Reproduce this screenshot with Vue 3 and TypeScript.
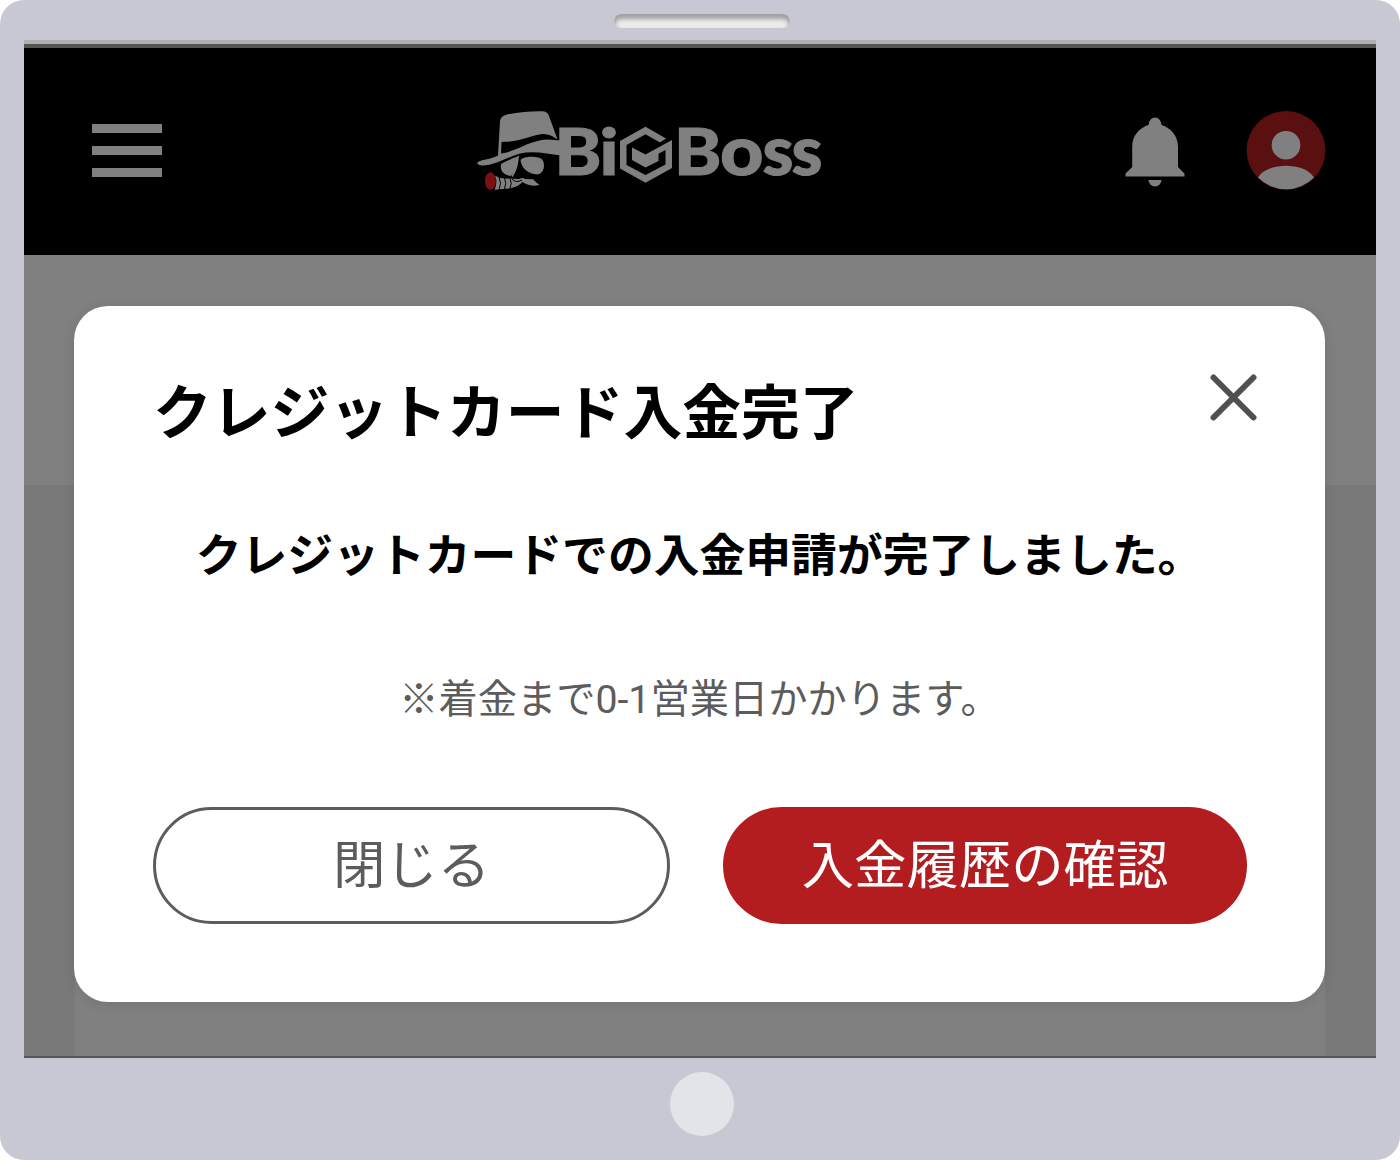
<script setup lang="ts">
interface DialogContent {
  title: string
  message: string
  note: string
  close: string
  confirm: string
}

const dialog: DialogContent = {
  title: 'クレジットカード入金完了',
  message: 'クレジットカードでの入金申請が完了しました。',
  note: '※着金まで0-1営業日かかります。',
  close: '閉じる',
  confirm: '入金履歴の確認',
}
</script>

<template>
  <div class="device">
    <div class="device-top"><span class="speaker"></span></div>

    <div class="screen">
      <header class="header">
        <button class="menu" aria-label="menu"><i></i><i></i><i></i></button>

        <svg class="logo" width="350" height="84" viewBox="475 108 350 84" fill="#808080">
          <path d="M498 155.500L500 121C501 117 503 115.500 507 114.500C519 111.800 532 111 542 111.200C546 111.200 548 113 549 116L557.500 139.500C553 136 548 133.700 542.500 134C533 134.600 521 142 501.500 142L501 153.500C514 152.500 530 140 547 139.500L561 140.500V155.500C548 154 534 150.500 520 153.500C505 158 494 166 481.500 165.500C476.500 165 476 162.500 480 161C486 159 493 158.500 498 155.500Z" />
          <path d="M501 164Q509 159.500 518 156.500Q517 172 510.500 176C502 175 500 169 501 164Z" />
          <path d="M520.500 160C524 155.500 540 156 542.500 160C546 166 543 174.500 537 174.500C529 174 521.500 169 520.500 160Z" />
          <path d="M518.300 156C517.500 163 517 169 512 176.500" fill="none" stroke="#808080" stroke-width="1.500" />
          <path d="M495 175.500Q500 179 507 178.500L519 179Q523 177 525 179L533 179.300Q537 183.500 539.500 184.800Q533 186.800 526 184L522.500 182Q518 187 509 188.500L494.500 189.700Q498 182 495 175.500Z" />
          <path d="M499 177Q502 183 499 190M504.500 178Q507 183 504.500 189M510 178.500Q512.500 183 510 188.500M512 179Q516 183.500 522 180" fill="none" stroke="#000" stroke-width="1" />
          <ellipse cx="490.400" cy="181" rx="5.500" ry="8.800" fill="#7a1014" />
          <g class="wordmark">
            <text x="554.500" y="174.500" textLength="47" lengthAdjust="spacingAndGlyphs">B</text>
            <text x="599.500" y="174.500" textLength="19" lengthAdjust="spacingAndGlyphs">i</text>
            <text x="674" y="174.500" textLength="47.500" lengthAdjust="spacingAndGlyphs">B</text>
            <text class="small" x="720" y="174.500" textLength="43.500" lengthAdjust="spacingAndGlyphs">o</text>
            <text class="small" x="762.500" y="174.500" textLength="31" lengthAdjust="spacingAndGlyphs">s</text>
            <text class="small" x="791.500" y="174.500" textLength="31" lengthAdjust="spacingAndGlyphs">s</text>
          </g>
          <path d="M645.500 126.700L666 138.500L660 142.500L645.500 134.200L626.500 145V165L645.500 175L665.500 164.500V150L658.500 153.800V161L645.500 167.500L632 160V147.500L645.500 154.500L672 140V168L645.500 182.700L620 168.500V141Z" />
        </svg>

        <svg class="bell" width="60" height="70" viewBox="0 0 60 70" fill="#808080">
          <path d="M23.500 8A6.500 7.500 0 0 1 36.500 8C46 11 53 19 53 29.500V50L59.500 56.500V59.500H.5V56.500L7.200 50V29.500C7.200 19 14 11 23.500 8Z" />
          <path d="M23.500 63H36.500A6.500 6.500 0 0 1 23.500 63Z" />
        </svg>

        <svg class="avatar" width="80" height="80" viewBox="0 0 80 80">
          <circle cx="40" cy="40.300" r="39.400" fill="#5a1011" />
          <circle cx="40" cy="35.200" r="14.300" fill="#808080" />
          <path d="M12 67.600C17 59 29 55.700 40 55.700S63 59 68 67.600A39.400 39.400 0 0 1 12 67.600Z" fill="#808080" />
        </svg>
      </header>

      <main class="page">
        <div class="page-head"></div>
        <div class="page-body"><div class="card"></div></div>
      </main>

      <section class="modal" role="dialog">
        <div class="title-row">
          <h1>{{ dialog.title }}</h1>
          <button class="close" aria-label="close">
            <svg width="47" height="47" viewBox="0 0 47 47">
              <path d="M3.500 3.500L43.500 43.500M43.500 3.500L3.500 43.500" stroke="#505050" stroke-width="6" stroke-linecap="round" />
            </svg>
          </button>
        </div>
        <p class="message">{{ dialog.message }}</p>
        <p class="note">{{ dialog.note }}</p>
        <div class="actions">
          <button class="btn outline">{{ dialog.close }}</button>
          <button class="btn primary">{{ dialog.confirm }}</button>
        </div>
      </section>
    </div>

    <div class="device-bottom"><span class="home"></span></div>
  </div>
</template>

<style>
body {
  margin: 0;
  background: #fff;
}
</style>

<style scoped>
* {
  box-sizing: border-box;
}

.device {
  width: 1400px;
  height: 1160px;
  display: flex;
  flex-direction: column;
  padding: 0 24px;
  overflow: hidden;
  border-radius: 24px;
  background: #c8c7d4;
  font-family: Roboto, 'Noto Sans CJK JP', sans-serif;
}

button {
  margin: 0;
  padding: 0;
  border: 0;
  background: none;
  font-family: inherit;
}

.device-top {
  height: 40px;
  flex: none;
  display: flex;
  justify-content: center;
  padding: 14px 0 0 4px;
}

.speaker {
  width: 176px;
  height: 14px;
  border-radius: 7px;
  background: #ebebeb;
  box-shadow: inset 0 4px 4px 1px #a0a0a0;
}

.device-bottom {
  flex: 1;
  display: flex;
  justify-content: center;
  padding: 14px 0 0 4px;
}

.home {
  width: 64px;
  height: 64px;
  border-radius: 50%;
  background: #e3e4e9;
}

.screen {
  position: relative;
  height: 1018px;
  flex: none;
  display: flex;
  flex-direction: column;
  border-top: 4px solid #b0b0b2;
  border-bottom: 2px solid #555658;
}

.header {
  height: 211px;
  flex: none;
  display: flex;
  align-items: center;
  padding: 2px 50px 0 68px;
  border-top: 4px solid #555;
  background: #000;
}

.menu {
  width: 70px;
  height: 53px;
  margin-top: -5px;
  display: flex;
  flex-direction: column;
  justify-content: space-between;
}

.menu i {
  width: 70px;
  height: 9px;
  background: #808080;
}

.logo {
  margin: -6px 0 0 313px;
}

.wordmark {
  font-family: Lato, sans-serif;
  font-weight: 900;
  font-size: 65px;
  stroke: #808080;
  stroke-width: 1;
}

.small {
  font-size: 69px;
}

.bell {
  margin: -1px 0 0 300px;
}

.avatar {
  margin: -5px 0 0 61px;
}

.page {
  flex: 1;
  display: flex;
  flex-direction: column;
}

.page-head {
  height: 230px;
  background: #808080;
}

.page-body {
  flex: 1;
  display: flex;
  padding: 0 51px;
  background: #797979;
}

.card {
  flex: 1;
  background: #808080;
}

.modal {
  position: absolute;
  top: 262px;
  left: 50px;
  width: 1251px;
  height: 696px;
  padding-top: 65px;
  border-radius: 34px;
  background: #fff;
  box-shadow: 0 2px 14px rgba(0, 0, 0, 0.1);
}

.title-row {
  height: 80px;
  display: flex;
  justify-content: space-between;
  align-items: flex-start;
  padding: 0 68px 0 79px;
}

h1 {
  margin: 3px 0 0;
  font-size: 58.800px;
  line-height: 80px;
  font-weight: 700;
}

.close {
  width: 47px;
  height: 47px;
  margin-top: 3px;
}

.close svg {
  display: block;
}

.message,
.note {
  text-align: center;
  white-space: nowrap;
}

.message {
  margin: 76px 0 0;
  font-size: 45.800px;
  line-height: 60px;
  font-weight: 700;
}

.note {
  margin: 88px 0 0;
  font-size: 39.250px;
  line-height: 50px;
  color: #5c5c5c;
}

.actions {
  display: flex;
  justify-content: space-between;
  margin-top: 82px;
  padding: 0 78px 0 79px;
}

.btn {
  height: 117px;
  border-radius: 59px;
  font-size: 52.400px;
  line-height: 70px;
}

.outline {
  width: 517px;
  border: 3px solid #5c5c5c;
  color: #5c5c5c;
}

.primary {
  width: 524px;
  background: #b41d20;
  color: #fff;
}
</style>
